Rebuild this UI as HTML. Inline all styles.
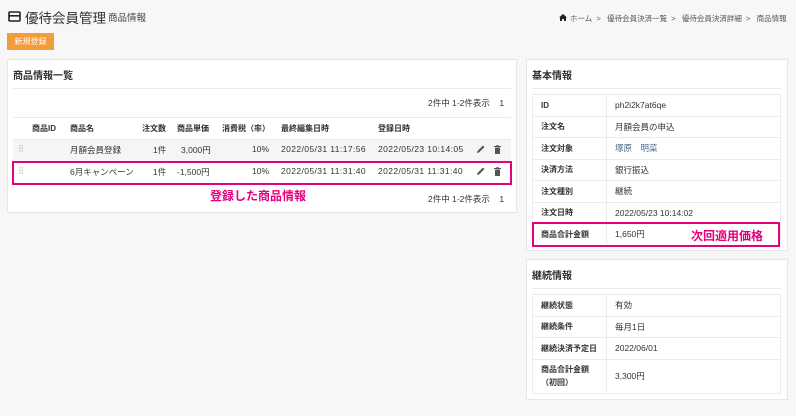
<!DOCTYPE html>
<html><head><meta charset="utf-8"><style>
*{margin:0;padding:0;box-sizing:border-box}
body{width:796px;height:416px;background:#f7f7f7;font-family:"Liberation Sans","Noto Sans CJK JP",sans-serif;color:#333;position:relative;overflow:hidden;font-size:9px}
.a{position:absolute;white-space:nowrap}
.panel{position:absolute;background:#fff;border:1px solid #e6e6e6}
.line{position:absolute;height:1px;background:#ececec}
table{border-collapse:collapse;position:absolute;font-size:8.5px;table-layout:fixed}
td{border:1px solid #ececec;padding:0 8px;height:21.5px;vertical-align:middle}
td.k{font-weight:bold;width:74px;font-size:8px;padding:0 3px 0 8px}
.pink{position:absolute;border:2px solid #e4007f}
.pt{position:absolute;color:#e4007f;font-weight:bold;font-size:12px;white-space:nowrap}
.ic{position:absolute}
</style></head><body>
<svg class="ic" style="left:8px;top:11px" width="13" height="11" viewBox="0 0 13 11"><rect x="1" y="1" width="11" height="9" rx="1" fill="none" stroke="#222" stroke-width="1.6"/><rect x="1" y="4" width="11" height="1.6" fill="#222"/></svg>
<div class="a" style="left:25px;top:7px;font-size:13.5px;color:#333">優待会員管理</div>
<div class="a" style="left:108px;top:10px;font-size:9.5px;color:#444">商品情報</div>
<svg class="ic" style="left:559px;top:14px" width="8" height="7" viewBox="0 0 8 7"><path d="M4 0L0 3.5H1V7H3V5H5V7H7V3.5H8Z" fill="#222"/></svg>
<div class="a" style="left:570px;top:13px;font-size:7.5px;color:#555">ホーム &nbsp;&gt;&nbsp;&nbsp; 優待会員決済一覧 &nbsp;&gt;&nbsp;&nbsp; 優待会員決済詳細 &nbsp;&gt;&nbsp;&nbsp; 商品情報</div>
<div class="a" style="left:7px;top:33px;width:47px;height:17px;background:#f29c3c;color:#fff;font-size:8px;line-height:17px;text-align:center">新規登録</div>

<div class="panel" style="left:7px;top:59px;width:510px;height:154px"></div>
<div class="a" style="left:13px;top:67px;font-size:10px;font-weight:bold">商品情報一覧</div>
<div class="line" style="left:13px;top:88px;width:498px"></div>
<div class="a" style="left:428px;top:97px;font-size:8.5px">2件中 1-2件表示 &nbsp;&nbsp;&nbsp;1</div>
<div class="line" style="left:13px;top:117px;width:498px"></div>
<div class="a" style="top:123px;left:0;font-size:8px;font-weight:bold;width:520px;height:12px">
<span class="a" style="left:32px">商品ID</span><span class="a" style="left:70px">商品名</span><span class="a" style="left:142px">注文数</span><span class="a" style="left:177px">商品単価</span><span class="a" style="left:222px">消費税（率）</span><span class="a" style="left:281px">最終編集日時</span><span class="a" style="left:378px">登録日時</span></div>
<div class="line" style="left:13px;top:139px;width:498px"></div>
<div class="a" style="left:13px;top:140px;width:498px;height:21px;background:#f5f5f5"></div>
<div class="line" style="left:13px;top:161px;width:498px"></div>
<div class="a" style="top:144px;left:0;width:520px;font-size:8.5px;height:12px">
<span class="a" style="left:18px;color:#bbb">⠿</span><span class="a" style="left:70px">月額会員登録</span><span class="a" style="left:153px">1件</span><span class="a" style="left:181px">3,000円</span><span class="a" style="left:252px">10%</span><span class="a" style="left:281px;letter-spacing:0.4px">2022/05/31 11:17:56</span><span class="a" style="left:378px;letter-spacing:0.4px">2022/05/23 10:14:05</span></div>
<div class="a" style="top:166px;left:0;width:520px;font-size:8.5px;height:12px">
<span class="a" style="left:18px;color:#bbb">⠿</span><span class="a" style="left:70px">6月キャンペーン</span><span class="a" style="left:153px">1件</span><span class="a" style="left:177px">-1,500円</span><span class="a" style="left:252px">10%</span><span class="a" style="left:281px;letter-spacing:0.4px">2022/05/31 11:31:40</span><span class="a" style="left:378px;letter-spacing:0.4px">2022/05/31 11:31:40</span></div>
<svg class="ic" style="left:477px;top:145px" width="8" height="8" viewBox="0 0 8 8"><path d="M0 8L0.5 6L6 0.5L7.5 2L2 7.5Z" fill="#555"/></svg>
<svg class="ic" style="left:494px;top:145px" width="7" height="9" viewBox="0 0 7 9"><path d="M0 1H7V2H0ZM2.5 0H4.5V1H2.5ZM1 2.5H6V9H1Z" fill="#555"/></svg>
<svg class="ic" style="left:477px;top:167px" width="8" height="8" viewBox="0 0 8 8"><path d="M0 8L0.5 6L6 0.5L7.5 2L2 7.5Z" fill="#555"/></svg>
<svg class="ic" style="left:494px;top:167px" width="7" height="9" viewBox="0 0 7 9"><path d="M0 1H7V2H0ZM2.5 0H4.5V1H2.5ZM1 2.5H6V9H1Z" fill="#555"/></svg>
<div class="pink" style="left:12px;top:161px;width:500px;height:24px"></div>
<div class="pt" style="left:210px;top:187px">登録した商品情報</div>
<div class="a" style="left:428px;top:193px;font-size:8.5px">2件中 1-2件表示 &nbsp;&nbsp;&nbsp;1</div>

<div class="panel" style="left:526px;top:59px;width:262px;height:192px"></div>
<div class="a" style="left:532px;top:67px;font-size:10px;font-weight:bold">基本情報</div>
<div class="line" style="left:532px;top:88px;width:249px"></div>
<table style="left:532px;top:94px;width:249px">
<tr><td class="k">ID</td><td>ph2i2k7at6qe</td></tr>
<tr><td class="k">注文名</td><td>月額会員の申込</td></tr>
<tr><td class="k">注文対象</td><td style="color:#4a6a8a">塚原　明菜</td></tr>
<tr><td class="k">決済方法</td><td>銀行振込</td></tr>
<tr><td class="k">注文種別</td><td>継続</td></tr>
<tr><td class="k">注文日時</td><td>2022/05/23 10:14:02</td></tr>
<tr><td class="k">商品合計金額</td><td>1,650円</td></tr>
</table>
<div class="pink" style="left:532px;top:222px;width:248px;height:25px"></div>
<div class="pt" style="left:691px;top:227px">次回適用価格</div>

<div class="panel" style="left:526px;top:259px;width:262px;height:141px"></div>
<div class="a" style="left:532px;top:267px;font-size:10px;font-weight:bold">継続情報</div>
<div class="line" style="left:532px;top:288px;width:249px"></div>
<table style="left:532px;top:294px;width:249px">
<tr><td class="k">継続状態</td><td>有効</td></tr>
<tr><td class="k">継続条件</td><td>毎月1日</td></tr>
<tr><td class="k" style="white-space:nowrap">継続決済予定日</td><td>2022/06/01</td></tr>
<tr><td class="k" style="height:34px;white-space:normal;line-height:13px;word-break:break-all">商品合計金額（初回）</td><td>3,300円</td></tr>
</table>
</body></html>
